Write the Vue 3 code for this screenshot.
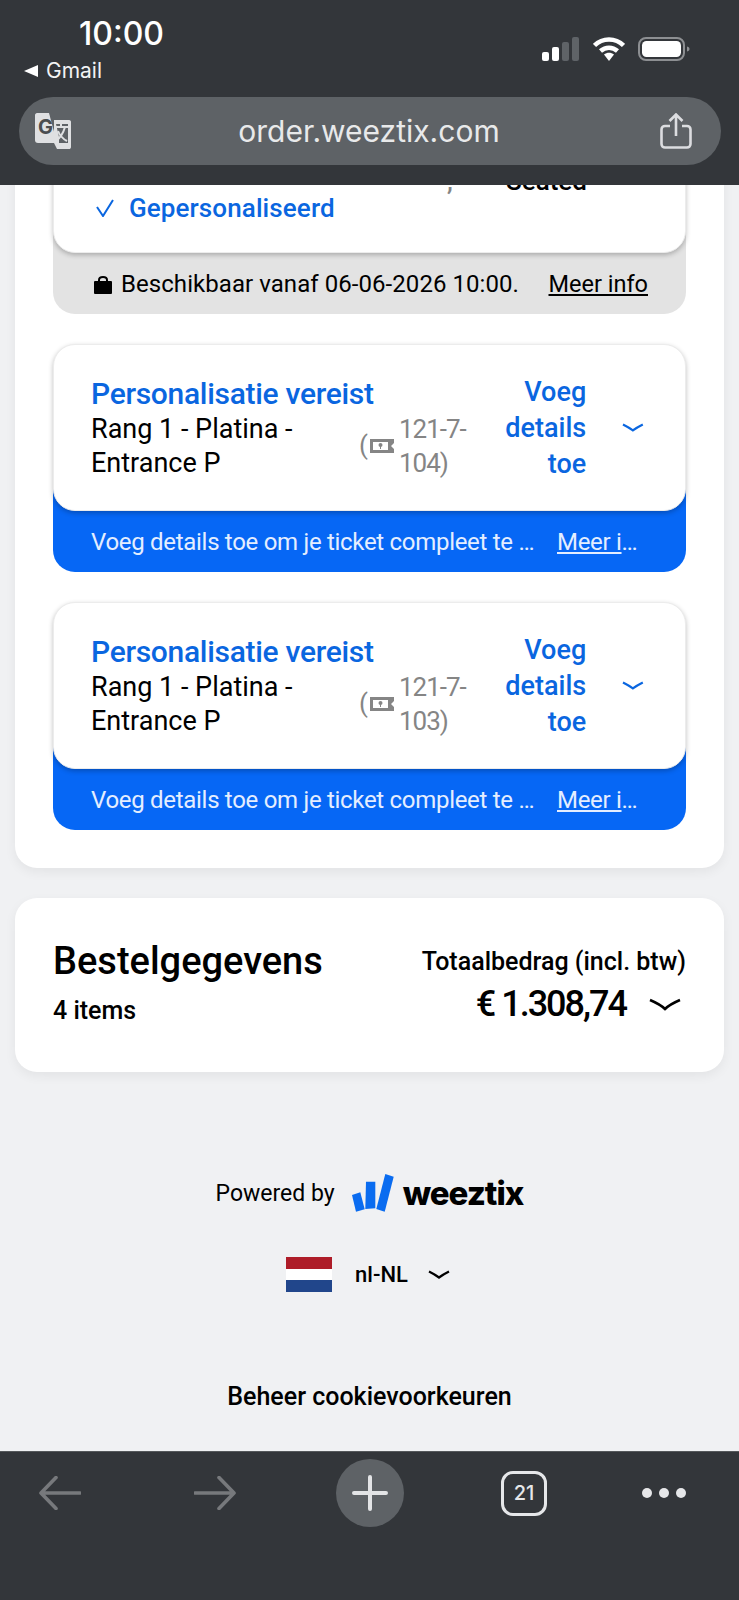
<template>
  <div class="phone">
    <header class="top-bar">
      <div class="status">
        <div class="status-left">
          <div class="clock">10:00</div>
          <div class="back-app"><span class="back-tri"></span>Gmail</div>
        </div>
        <div class="status-right">
          <svg class="signal" width="38" height="24" viewBox="0 0 38 24">
            <rect x="0" y="15" width="7" height="9" rx="2" fill="#fff" />
            <rect x="10" y="10" width="7" height="14" rx="2" fill="#fff" />
            <rect x="20" y="5" width="7" height="19" rx="2" fill="#5f6367" />
            <rect x="30" y="0" width="7" height="24" rx="2" fill="#5f6367" />
          </svg>
          <svg class="wifi" width="32" height="24" viewBox="0 0 32 24">
            <path d="M1.5 8.5C9.5 .5 22.500 .5 30.500 8.500" fill="none" stroke="#fff" stroke-width="4.500" />
            <path d="M7.500 14C12.500 9.500 19.500 9.500 24.500 14" fill="none" stroke="#fff" stroke-width="4.500" />
            <path d="M11 17.500C14 15 18 15 21 17.500L16 24Z" fill="#fff" />
          </svg>
          <svg class="battery" width="52" height="24" viewBox="0 0 52 24">
            <rect x="1" y="1" width="45" height="22" rx="7" fill="none" stroke="#8d8f92" stroke-width="2" />
            <rect x="4" y="4" width="39" height="16" rx="4.500" fill="#fff" />
            <path d="M49 9.500C51 10 51.500 11 51.500 12C51.500 13 51 14 49 14.500Z" fill="#8d8f92" />
          </svg>
        </div>
      </div>
      <div class="address">
        <svg class="translate" width="36" height="36" viewBox="0 0 36 36">
          <path d="M2 0H14L22 30H3C1 30 0 29 0 27V2C0 1 1 0 2 0Z" fill="#dfe0e2" />
          <text x="3" y="21" class="translate-g">G</text>
          <path d="M19 7H34C35.500 7 36 8 36 9V34C36 35.500 35 36 34 36H22L19 30Z" fill="#dfe0e2" />
          <path d="M24 30H33V11H21L24 24Z" fill="#5e6266" />
          <path d="M20 14H33M26 11V14M30 14C28 21 25 25 21 28M23 18C25 23 28 26 32 28" fill="none" stroke="#dfe0e2" stroke-width="2" />
        </svg>
        <span class="url">order.weeztix.com</span>
        <svg class="share" width="32" height="36" viewBox="0 0 32 36">
          <path d="M10 13H5C3 13 1.500 14.500 1.500 16.500V31C1.500 33 3 34.500 5 34.500H27C29 34.500 30.500 33 30.500 31V16.500C30.500 14.500 29 13 27 13H22" fill="none" stroke="#dcdde0" stroke-width="2.600" />
          <path d="M16 23V2M9.500 8L16 1.500L22.500 8" fill="none" stroke="#dcdde0" stroke-width="2.600" />
        </svg>
      </div>
    </header>

    <main class="content">
      <div class="scroll">
        <section class="tickets">
          <article class="ticket">
            <div class="ticket-main ticket-done">
              <div class="done-line"><span class="done-comma">,</span><span class="done-seat">Seated</span></div>
              <div class="done-status">
                <svg width="18" height="18" viewBox="0 0 18 18">
                  <path d="M1 8L7 17L17 1" fill="none" stroke="#0a66e0" stroke-width="2" />
                </svg>
                Gepersonaliseerd
              </div>
            </div>
            <div class="ticket-foot">
              <svg class="lock" width="18" height="19" viewBox="0 0 18 19">
                <path d="M5 7V5C5 1 13 1 13 5V7" fill="none" stroke="#000" stroke-width="2" />
                <rect y="6" width="18" height="13" rx="1" />
              </svg>
              <span class="foot-text">Beschikbaar vanaf 06-06-2026 10:00.</span>
              <span class="foot-link">Meer info</span>
            </div>
          </article>

          <article v-for="t in tickets" :key="t.seat" class="ticket">
            <div class="ticket-main">
              <div class="ticket-info">
                <div class="ticket-title">Personalisatie vereist</div>
                <div class="ticket-desc">
                  <div class="ticket-name">Rang 1 - Platina - Entrance P</div>
                  <div class="ticket-seat">
                    <span class="paren">(</span>
                    <svg width="24" height="14" viewBox="0 0 24 14">
                      <path d="M0 0H24V4L21 7L24 10V14H0Z" fill="#858585" />
                      <rect x="3" y="3" width="15" height="8" fill="#fff" />
                      <circle cx="10.500" cy="6" r="2" fill="#858585" />
                      <rect x="10" y="7" width="1" height="3" fill="#858585" />
                    </svg>
                    <span class="seat-nr">{{ t.seat }})</span>
                  </div>
                </div>
              </div>
              <div class="ticket-action">Voeg details toe</div>
              <svg class="ticket-chevron" width="22" height="9" viewBox="0 0 22 9">
                <path d="M1 1.500C6 4 9 6 11 7.500C13 6 16 4 21 1.500" fill="none" stroke="#0a66e0" stroke-width="2.200" />
              </svg>
            </div>
            <div class="ticket-notice">
              <span class="notice-text">Voeg details toe om je ticket compleet te maken</span>
              <span class="notice-link">Meer info</span>
            </div>
          </article>
        </section>

        <section class="order">
          <div class="order-left">
            <h2 class="order-title">Bestelgegevens</h2>
            <div class="order-count">4 items</div>
          </div>
          <div class="order-right">
            <div class="order-label">Totaalbedrag (incl. btw)</div>
            <div class="order-total">
              <span class="amount">€ 1.308,74</span>
              <svg width="32" height="13" viewBox="0 0 32 13">
                <path d="M1 2C8 5 13 8 16 11C19 8 24 5 31 2" fill="none" stroke="#000" stroke-width="2.600" />
              </svg>
            </div>
          </div>
        </section>

        <footer class="page-foot">
          <div class="powered">
            <span class="powered-by">Powered by</span>
            <svg class="logo" width="42" height="38" viewBox="0 0 42 38">
              <path d="M0 21L8.300 18.300L12.700 35.300L4 37.700Z" fill="#0a6cf0" />
              <path d="M14 7.700H23.300V34.300L13.300 35Z" fill="#0a6cf0" />
              <path d="M33.300 0L41.700 2.700L32.700 37.700L24.300 35Z" fill="#0a6cf0" />
            </svg>
            <span class="brand">weeztix</span>
          </div>
          <div class="locale">
            <span class="flag"></span>
            <span class="locale-name">nl-NL</span>
            <svg width="22" height="9" viewBox="0 0 22 9">
              <path d="M1 1.500C6 4 9 6 11 7.500C13 6 16 4 21 1.500" fill="none" stroke="#000" stroke-width="2.200" />
            </svg>
          </div>
          <div class="cookies">Beheer cookievoorkeuren</div>
        </footer>
      </div>
    </main>

    <nav class="bottom-bar">
      <svg width="42" height="34" viewBox="0 0 42 34">
        <path d="M41 17H3M17 1.500L2 17L17 32.500" fill="none" stroke="#77797c" stroke-width="3.600" stroke-linecap="round" stroke-linejoin="round" />
      </svg>
      <svg width="42" height="34" viewBox="0 0 42 34">
        <path d="M1 17H39M25 1.500L40 17L25 32.500" fill="none" stroke="#77797c" stroke-width="3.600" stroke-linecap="round" stroke-linejoin="round" />
      </svg>
      <div class="new-tab">
        <svg width="36" height="36" viewBox="0 0 36 36">
          <path d="M18 2V34M2 18H34" fill="none" stroke="#e3e4e6" stroke-width="4" stroke-linecap="round" />
        </svg>
      </div>
      <div class="tab-count">21</div>
      <div class="more"><i></i><i></i><i></i></div>
    </nav>
  </div>
</template>

<script setup>
const tickets = [{ seat: '121-7-104' }, { seat: '121-7-103' }]
</script>

<style>
html,
body {
  margin: 0;
  background: #f0f1f3;
}
</style>

<style scoped>
.phone {
  width: 739px;
  height: 1600px;
  display: flex;
  flex-direction: column;
  overflow: hidden;
  background: #f0f1f3;
  color: #000;
  font-family: Roboto, "Liberation Sans", sans-serif;
}

.top-bar {
  height: 185px;
  flex-shrink: 0;
  background: #33363a;
  box-sizing: border-box;
  padding: 17px 19px 0;
  position: relative;
  z-index: 2;
}

.status {
  height: 80px;
  display: flex;
  justify-content: space-between;
}

.status-left {
  color: #fff;
}

.clock {
  margin-left: 60px;
  font-family: Inter, sans-serif;
  font-size: 32px;
  font-weight: 500;
  line-height: 34px;
}

.back-app {
  display: flex;
  align-items: center;
  gap: 8px;
  margin-top: 3px;
  margin-left: 5px;
  font-family: Inter, sans-serif;
  font-size: 21px;
  line-height: 34px;
  color: #f2f3f4;
}

.back-tri {
  width: 0;
  height: 0;
  border-style: solid;
  border-width: 6px 14px 6px 0;
  border-color: transparent #fff transparent transparent;
}

.status-right {
  display: flex;
  align-items: flex-start;
  padding-top: 20px;
  padding-right: 30px;
  gap: 13px;
}

.address {
  height: 68px;
  margin-right: -1px;
  border-radius: 34px;
  background: #5e6266;
  display: flex;
  align-items: center;
  justify-content: space-between;
  padding: 0 29px 0 16px;
}

.translate-g {
  font-family: Inter, sans-serif;
  font-size: 20px;
  font-weight: 700;
  fill: #4a4d50;
}

.url {
  margin-left: 7px;
  font-family: Inter, sans-serif;
  font-size: 30px;
  color: #e8e9ea;
}

.content {
  flex: 1;
  overflow: hidden;
}

.scroll {
  margin-top: -85px;
  padding: 0 15px;
}

.tickets {
  background: #fff;
  border-radius: 0 0 22px 22px;
  padding: 38px;
  display: flex;
  flex-direction: column;
  gap: 30px;
  box-shadow: 0 4px 12px rgba(0, 0, 0, 0.06);
}

.ticket-main {
  background: #fff;
  border-radius: 22px;
  border: 1px solid #ececec;
  box-sizing: border-box;
  box-shadow: 0 2px 5px rgba(0, 0, 0, 0.25);
  display: flex;
  align-items: center;
  height: 167px;
  padding: 0 41px 0 37px;
  position: relative;
}

.ticket-done {
  display: block;
  height: 115px;
  padding-top: 30px;
}

.done-line {
  height: 24px;
  line-height: 24px;
  font-size: 26px;
  font-weight: 500;
  display: flex;
  padding-left: 356px;
}

.done-comma {
  width: 59px;
  color: #858585;
}

.done-status {
  display: flex;
  align-items: center;
  gap: 15px;
  padding-left: 5px;
  height: 30px;
  font-size: 26px;
  font-weight: 500;
  letter-spacing: 0.1px;
  color: #0a66e0;
}

.ticket-foot {
  height: 83px;
  margin-top: -22px;
  padding: 22px 38px 0 41px;
  box-sizing: border-box;
  border-radius: 0 0 22px 22px;
  background: #e3e3e3;
  display: flex;
  align-items: center;
  font-size: 24px;
}

.lock {
  margin-right: 9px;
  margin-top: 2px;
}

.foot-text {
  flex: 1;
  letter-spacing: 0.06px;
}

.foot-link {
  font-size: 23.5px;
  text-decoration: underline;
}

.ticket-info {
  width: 396px;
}

.ticket-title {
  font-size: 30px;
  font-weight: 500;
  line-height: 36px;
  letter-spacing: -0.3px;
  color: #0a66e0;
  white-space: nowrap;
}

.ticket-desc {
  display: flex;
}

.ticket-name {
  width: 268px;
  font-size: 27px;
  line-height: 34px;
}

.ticket-seat {
  display: flex;
  align-items: center;
  color: #858585;
  font-size: 26px;
  line-height: 34px;
}

.paren {
  margin-top: -2px;
  margin-right: 2px;
}

.seat-nr {
  width: 72px;
  margin-left: 5px;
  letter-spacing: -1px;
}

.ticket-action {
  width: 104px;
  text-align: right;
  font-size: 27px;
  font-weight: 500;
  line-height: 36px;
  color: #0a66e0;
}

.ticket-chevron {
  margin-left: 36px;
}

.ticket-notice {
  height: 83px;
  margin-top: -22px;
  padding: 22px 47px 0 38px;
  box-sizing: border-box;
  border-radius: 0 0 22px 22px;
  background: #0667f5;
  display: flex;
  align-items: center;
  gap: 21px;
  font-size: 24px;
  letter-spacing: -0.3px;
  color: #e4eeff;
}

.notice-text {
  width: 445px;
  white-space: nowrap;
  overflow: hidden;
  text-overflow: ellipsis;
}

.notice-link {
  width: 82px;
  white-space: nowrap;
  overflow: hidden;
  text-overflow: ellipsis;
  text-decoration: underline;
}

.order {
  margin-top: 30px;
  height: 174px;
  background: #fff;
  border-radius: 22px;
  box-shadow: 0 4px 12px rgba(0, 0, 0, 0.06);
  display: flex;
  justify-content: space-between;
  align-items: center;
  padding: 0 38px;
}

.order-left {
  margin-top: -7px;
}

.order-title {
  margin: 0;
  font-size: 38px;
  font-weight: 500;
  line-height: 46px;
}

.order-count {
  margin-top: 12px;
  font-size: 25px;
  font-weight: 500;
  line-height: 30px;
}

.order-right {
  margin-top: 2px;
  text-align: right;
}

.order-label {
  font-size: 25px;
  font-weight: 500;
  line-height: 30px;
}

.order-total {
  display: flex;
  justify-content: flex-end;
  align-items: center;
  gap: 23px;
  margin-top: 6px;
  padding-right: 5px;
}

.amount {
  font-size: 36px;
  font-weight: 500;
  letter-spacing: -2px;
  line-height: 42px;
}

.page-foot {
  display: flex;
  flex-direction: column;
  align-items: center;
}

.powered {
  margin-top: 102px;
  height: 38px;
  display: flex;
  align-items: center;
}

.powered-by {
  font-size: 23px;
  margin-right: 17px;
}

.brand {
  margin-left: 9px;
  font-family: Inter, sans-serif;
  font-size: 33px;
  font-weight: 800;
  letter-spacing: -1px;
}

.locale {
  margin-top: 45px;
  height: 35px;
  padding-right: 3px;
  display: flex;
  align-items: center;
  gap: 23px;
  font-size: 22px;
  font-weight: 500;
}

.flag {
  width: 46px;
  height: 35px;
  background: linear-gradient(#ae1c28 33.3%, #fff 33.3% 66.6%, #21468b 66.6%);
}

.locale-name {
  margin-right: -3px;
}

.cookies {
  margin-top: 90px;
  font-size: 25px;
  font-weight: 500;
  line-height: 30px;
}

.bottom-bar {
  height: 149px;
  flex-shrink: 0;
  background: #33363a;
  box-sizing: border-box;
  border-top: 1px solid #55585b;
  padding-top: 7px;
  display: grid;
  grid-template-columns: 120px 190px 120px 188px 92px;
  grid-template-rows: 68px;
  justify-items: center;
  align-items: center;
}

.new-tab {
  width: 68px;
  height: 68px;
  border-radius: 50%;
  background: #5e6266;
  display: flex;
  align-items: center;
  justify-content: center;
}

.tab-count {
  width: 46px;
  height: 45px;
  box-sizing: border-box;
  border: 3.500px solid #e6e7e9;
  border-radius: 12px;
  display: flex;
  align-items: center;
  justify-content: center;
  font-family: Inter, sans-serif;
  font-size: 20px;
  font-weight: 500;
  color: #e6e7e9;
}

.more {
  display: flex;
  gap: 7px;
}

.more i {
  width: 10px;
  height: 10px;
  border-radius: 50%;
  background: #e6e7e9;
}
</style>
